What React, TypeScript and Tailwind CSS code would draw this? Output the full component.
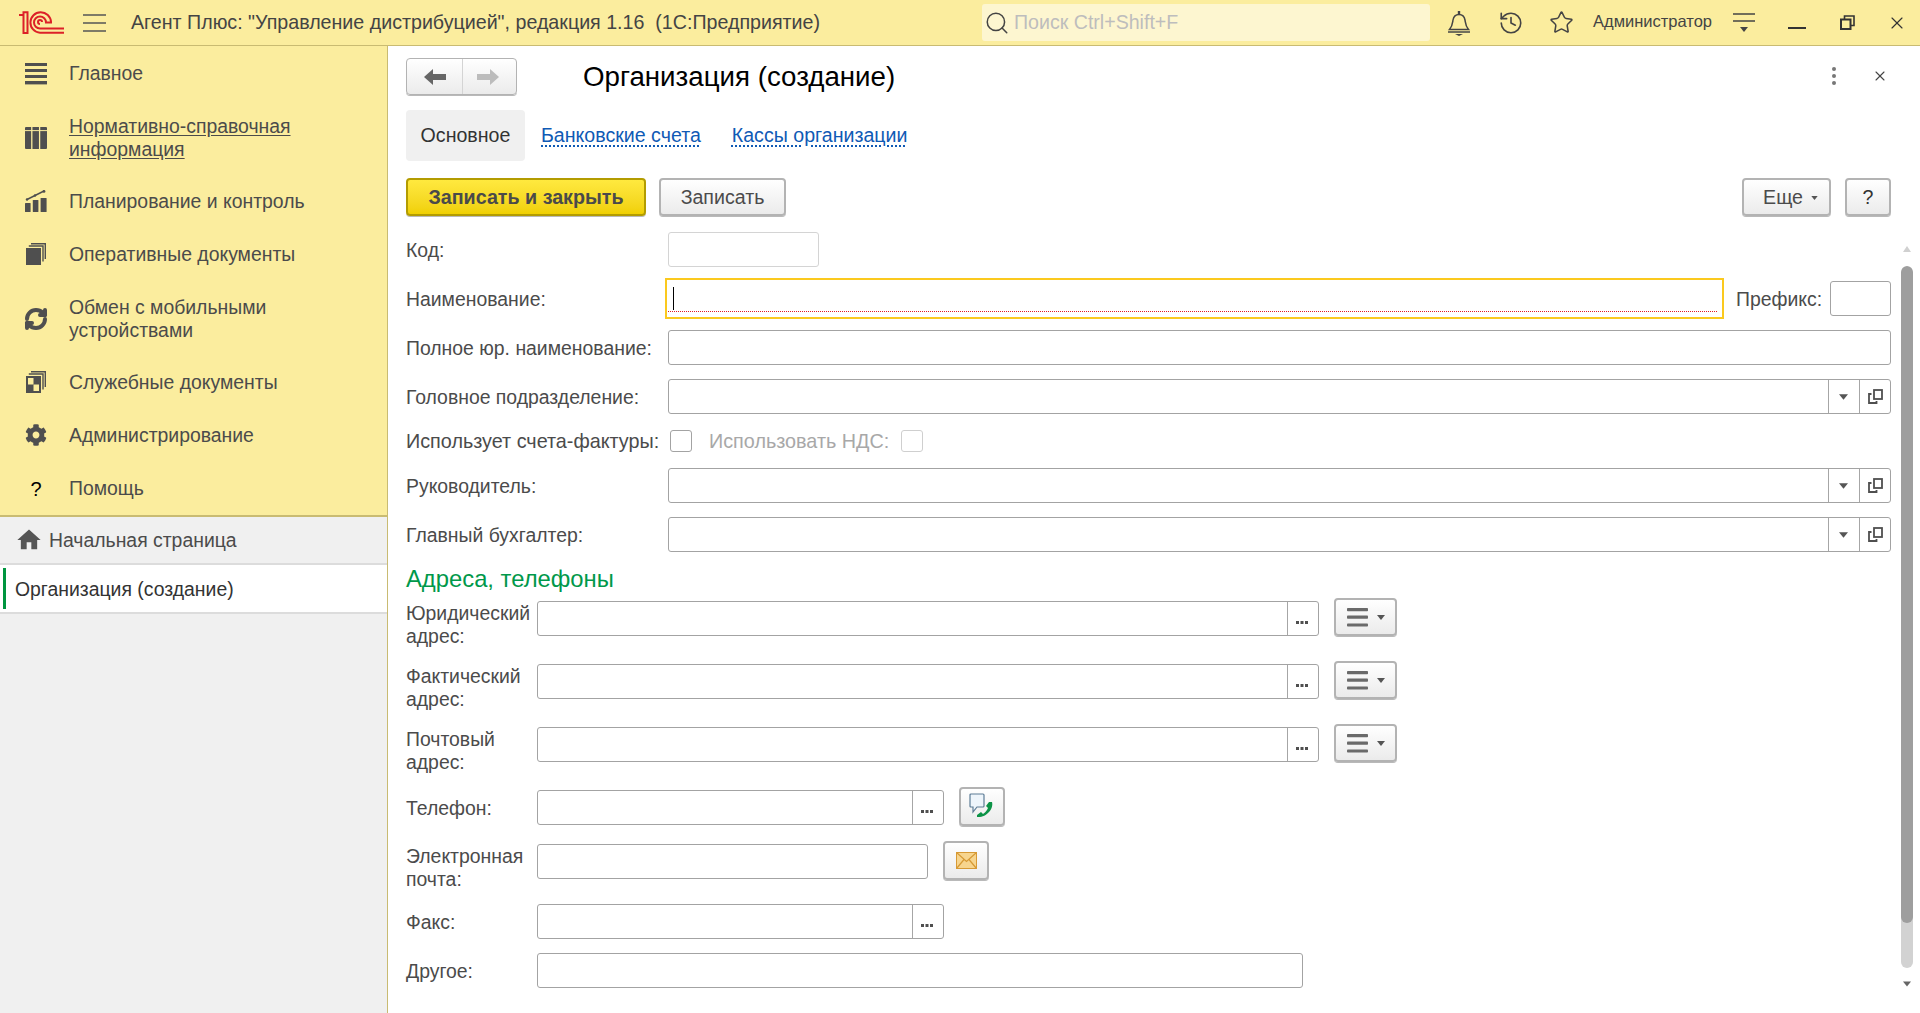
import React from "react";
import { History, Search, Star, X, RefreshCw } from "lucide-react";
import { FaCog } from "react-icons/fa";
import { MdHome } from "react-icons/md";

const Logo = () => (
  <svg width="45" height="23" viewBox="0 0 45 23" fill="none" stroke="#dc2128" strokeWidth="2">
    <path d="M0 4 H4.5 V1.2 H8.5 V22 H4.5 V5" />
    <path d="M45 21.8 H21 A10.3 10.3 0 1 1 32 11" />
    <path d="M45 17.5 H21 A6 6 0 1 1 27 11.5 H33" />
    <path d="M21 13 A2 2 0 1 1 23 11" />
  </svg>
);

const Hamburger = () => (
  <svg width="23" height="18" viewBox="0 0 23 18" stroke="#555" strokeWidth="1.4">
    <path d="M0 1 H23 M0 9 H23 M0 17 H23" />
  </svg>
);

const IconList = () => (
  <svg width="22" height="22" viewBox="0 0 22 22" fill="#4f4f4f">
    <rect y="0" width="22" height="3" />
    <rect y="6" width="22" height="3" />
    <rect y="12" width="22" height="3" />
    <rect y="18" width="22" height="3.4" />
  </svg>
);
const IconTable = () => (
  <svg width="22" height="22" viewBox="0 0 22 22" fill="#4f4f4f">
    <rect x="0" y="0" width="22" height="22" rx="1" />
    <path d="M6.8 0 V22 M14.6 0 V22" stroke="#fbed9e" strokeWidth="1.3" />
    <path d="M0 3.6 H22" stroke="#fbed9e" strokeWidth="1" />
  </svg>
);
const IconChart = () => (
  <svg width="22" height="22" viewBox="0 0 22 22" fill="#4f4f4f">
    <rect x="0" y="13" width="5.6" height="9" rx="0.6" />
    <rect x="7.8" y="10" width="5.6" height="12" rx="0.6" />
    <rect x="15.6" y="8" width="6" height="14" rx="0.6" />
    <path d="M2 9.5 L10 5.5 L19 1" stroke="#4f4f4f" strokeWidth="1.5" fill="none" />
    <circle cx="19" cy="1.4" r="1.4" />
    <circle cx="10" cy="5.5" r="1.2" />
    <circle cx="2" cy="9.5" r="1.2" />
  </svg>
);
const IconDocs = ({ check = false }: { check?: boolean }) => (
  <svg width="20" height="22" viewBox="0 0 20 22" fill="none">
    <rect x="0" y="5" width="15" height="17" fill="#4f4f4f" />
    {check && (
      <>
        <rect x="2" y="7" width="5.5" height="6.5" fill="#fbed9e" />
        <rect x="7.5" y="13.5" width="5.5" height="6.5" fill="#fbed9e" />
      </>
    )}
    <path d="M2.8 3 H17 V18.5" stroke="#4f4f4f" strokeWidth="1.4" />
    <path d="M5 0.8 H19.3 V16" stroke="#4f4f4f" strokeWidth="1.4" />
  </svg>
);

const IconBell = () => (
  <svg width="24" height="26" viewBox="0 0 24 26" fill="none" stroke="#444" strokeWidth="1.5">
    <path d="M2.5 19.5 C5.5 16 5.5 13 6 10 C6.6 6.5 9 4.5 12 4.5 C15 4.5 17.4 6.5 18 10 C18.5 13 18.5 16 21.5 19.5 Z" />
    <path d="M12 1 V4.5" strokeWidth="2.4" />
    <path d="M1 22 H23" />
    <path d="M8 24 H16 L12 26 Z" fill="#444" stroke="none" />
  </svg>
);

const IconFilter = () => (
  <svg width="22" height="20" viewBox="0 0 22 20" fill="none" stroke="#444" strokeWidth="1.4">
    <path d="M0 1 H22 M0 8 H22" />
    <path d="M7 14 H15 L11 19 Z" fill="#444" stroke="none" />
  </svg>
);

const IconRestore = () => (
  <svg width="15" height="15" viewBox="0 0 15 15" fill="none" stroke="#333" strokeWidth="2">
    <rect x="1" y="4.5" width="9.5" height="9.5" />
    <path d="M4.5 4 V1 H14 V10.5 H11" strokeWidth="1.6" />
  </svg>
);

const Triangle = ({ w = 9, h = 6, color = "#555" }: { w?: number; h?: number; color?: string }) => (
  <svg width={w} height={h} viewBox="0 0 8 5">
    <path d="M0 0 H8 L4 5 Z" fill={color} />
  </svg>
);

const IconCopy = () => (
  <svg width="15" height="15" viewBox="0 0 15 15" fill="none" stroke="#4f4f4f">
    <rect x="6" y="1" width="8" height="9" strokeWidth="1.8" />
    <path d="M3.5 5 H1 V14 H8.5 V12" strokeWidth="1.8" />
  </svg>
);

const Dots = () => (
  <svg width="12" height="3" viewBox="0 0 12 3" fill="#4f4f4f" className="mt-[7px]">
    <rect x="0" width="3" height="3" />
    <rect x="4.5" width="3" height="3" />
    <rect x="9" width="3" height="3" />
  </svg>
);

const ArrowLeft = ({ color }: { color: string }) => (
  <svg width="22" height="16" viewBox="0 0 22 16">
    <path d="M0 8 L9 0 V5 H22 V11 H9 V16 Z" fill={color} />
  </svg>
);
const ArrowRight = ({ color }: { color: string }) => (
  <svg width="22" height="16" viewBox="0 0 22 16">
    <path d="M22 8 L13 0 V5 H0 V11 H13 V16 Z" fill={color} />
  </svg>
);

const IconMenuBars = () => (
  <svg width="21" height="19" viewBox="0 0 21 19" fill="#6a6a6a">
    <rect width="21" height="3.2" rx="0.8" />
    <rect y="7.6" width="21" height="3.2" rx="0.8" />
    <rect y="15.4" width="21" height="3.2" rx="0.8" />
  </svg>
);

const IconPhone = () => (
  <svg width="26" height="28" viewBox="0 0 26 28" fill="none">
    <path d="M1 2 Q1 1 2 1 H14 Q15 1 15 2 V13 Q15 14 14 14 H8 L4 19 V14 H2 Q1 14 1 13 Z" fill="#eef5fb" stroke="#5d7c96" strokeWidth="1.2" />
    <path d="M23 9 C25 16 17 25 8 24 L8 22 L12 19 L14 21 C17 19 18 17 19 15 L17 13 L20 9 Z" fill="#0d9347" />
  </svg>
);

const IconMail = () => (
  <svg width="21" height="17" viewBox="0 0 21 17" fill="none">
    <rect x="0.5" y="0.5" width="20" height="16" fill="#f7d58e" stroke="#d79a35" />
    <path d="M0.5 0.5 L10.5 9.5 L20.5 0.5 M0.5 16.5 L8 7.5 M20.5 16.5 L13 7.5" stroke="#d79a35" strokeWidth="1.2" />
  </svg>
);

const menu: { h: string; label: React.ReactNode; icon: React.ReactNode }[] = [
  { h: "h-[55px]", label: "Главное", icon: <IconList /> },
  {
    h: "h-[74px]",
    label: (
      <span className="underline underline-offset-2">
        Нормативно-справочная
        <br />
        информация
      </span>
    ),
    icon: <IconTable />,
  },
  { h: "h-[52px]", label: "Планирование и контроль", icon: <IconChart /> },
  { h: "h-[56px] pb-[2px]", label: "Оперативные документы", icon: <IconDocs /> },
  {
    h: "h-[71px]",
    label: (
      <span>
        Обмен с мобильными
        <br />
        устройствами
      </span>
    ),
    icon: <RefreshCw size={24} strokeWidth={4} color="#4f4f4f" />,
  },
  { h: "h-[56px]", label: "Служебные документы", icon: <IconDocs check /> },
  { h: "h-[52px] pb-[2px]", label: "Администрирование", icon: <FaCog size={22} color="#4f4f4f" /> },
  { h: "h-[53px]", label: "Помощь", icon: <span className="text-[20px] text-black">?</span> },
];

const Sidebar = () => (
  <aside className="flex w-[388px] shrink-0 flex-col border-r border-[#c9bb72] bg-[#f0f0f0] text-[19.4px]">
    <nav className="flex flex-col border-b-2 border-[#c9bb72] bg-[#fbed9e]">
      {menu.map((m, i) => (
        <div key={i} className={`flex items-center ${m.h}`}>
          <div className="flex w-[69px] shrink-0 items-center justify-center pl-[3px] pr-0">{m.icon}</div>
          <div className="leading-[23px] text-[#4b4b4b]">{m.label}</div>
        </div>
      ))}
    </nav>
    <div className="flex h-[48px] items-center gap-[6px] border-b-2 border-[#dcdcdc] pl-[15px] pt-[2px]">
      <MdHome size={28} color="#555" className="-mt-[3px]" />
      <span className="text-[#4b4b4b]">Начальная страница</span>
    </div>
    <div className="flex h-[49px] items-center border-b-2 border-[#dcdcdc] bg-white pl-[3px]">
      <div className="h-[41px] w-[3px] bg-[#00953f]" />
      <span className="ml-[9px] pt-[3px] text-[#333]">Организация (создание)</span>
    </div>
  </aside>
);

const Btn = ({ className = "", children }: { className?: string; children: React.ReactNode }) => (
  <button className={`flex items-center justify-center rounded-[4px] border-2 border-[#b3b3b3] bg-linear-to-b from-white to-[#ebebeb] text-[#4b4b4b] shadow-[0_1px_0_#b9b9b9] ${className}`}>
    {children}
  </button>
);

const Label = ({ w, children }: { w: string; children: React.ReactNode }) => (
  <div className={`shrink-0 leading-[23px] text-[#4b4b4b] ${w}`}>{children}</div>
);

const Cell = ({ className = "", children }: { className?: string; children: React.ReactNode }) => (
  <div className={`flex h-full w-[31px] shrink-0 items-center justify-center border-l border-[#a6a6a6] ${className}`}>{children}</div>
);

const Field = ({ className = "", children }: { className?: string; children?: React.ReactNode }) => (
  <div className={`flex h-[35px] items-stretch justify-end rounded-[3px] border border-[#a3a3a3] bg-white ${className}`}>{children}</div>
);

const RefField = ({ label, className = "" }: { label: string; className?: string }) => (
  <div className={`flex h-[35px] items-center ${className}`}>
    <Label w="w-[262px] pt-[2px]">{label}</Label>
    <Field className="flex-1">
      <Cell className="pr-[2px]">
        <Triangle />
      </Cell>
      <Cell>
        <IconCopy />
      </Cell>
    </Field>
  </div>
);

const PlainField = ({ label, className = "" }: { label: string; className?: string }) => (
  <div className={`flex h-[35px] items-center ${className}`}>
    <Label w="w-[262px] pt-[2px]">{label}</Label>
    <Field className="flex-1" />
  </div>
);

const EllipsisCell = () => (
  <Cell className="pr-[2px]">
    <Dots />
  </Cell>
);

const AddressRow = ({ label, className = "" }: { label: string; className?: string }) => (
  <div className={`flex h-[35px] items-start ${className}`}>
    <Label w="w-[131px] pt-[1px]">{label}</Label>
    <Field className="w-[782px]">
      <EllipsisCell />
    </Field>
    <Btn className="relative -top-[3px] ml-[15px] h-[38px] w-[63px] gap-[9px] pl-[1px]">
      <IconMenuBars />
      <Triangle w={8} h={5} />
    </Btn>
  </div>
);

const Form = () => (
  <div className="flex-1 pl-[18px] text-[19.4px]">
    <div className="mt-[7px] flex h-[35px] items-center">
      <Label w="w-[262px] pt-[2px]">Код:</Label>
      <div className="h-[35px] w-[151px] rounded-[3px] border border-[#d4d4d4]" />
    </div>

    <div className="mt-[11px] flex h-[41px] items-center">
      <Label w="w-[259px] pt-[2px]">Наименование:</Label>
      <div className="relative h-[41px] w-[1059px] border-2 border-[#fbc91e] bg-white">
        <div className="absolute left-[6px] top-[7px] h-[23px] w-[1px] bg-black" />
        <div className="absolute left-[1px] right-[5px] top-[31px] border-b border-dotted border-[#e11b22]" />
      </div>
      <div className="ml-[12px] w-[94px] shrink-0 pt-[2px] text-[#4b4b4b]">Префикс:</div>
      <Field className="w-[61px]" />
    </div>

    <PlainField label="Полное юр. наименование:" className="mt-[11px]" />
    <RefField label="Головное подразделение:" className="mt-[14px]" />

    <div className="mt-[16px] flex h-[22px] items-center text-[19.8px]">
      <Label w="w-[264px]">Использует счета-фактуры:</Label>
      <div className="h-[22px] w-[22px] rounded-[3px] border border-[#a3a3a3]" />
      <div className="ml-[17px] w-[192px] shrink-0 leading-[23px] text-[#a8a8a8]">Использовать НДС:</div>
      <div className="h-[22px] w-[22px] rounded-[3px] border border-[#cfcfcf]" />
    </div>

    <RefField label="Руководитель:" className="mt-[16px]" />
    <RefField label="Главный бухгалтер:" className="mt-[14px]" />

    <div className="mt-[13px] h-[28px] text-[23.8px] leading-[28px] text-[#00984a]">Адреса, телефоны</div>

    <AddressRow label="Юридический адрес:" className="mt-[8px]" />
    <AddressRow label="Фактический адрес:" className="mt-[28px]" />
    <AddressRow label="Почтовый адрес:" className="mt-[28px]" />

    <div className="mt-[28px] flex h-[35px] items-start">
      <Label w="w-[131px] pt-[7px]">Телефон:</Label>
      <Field className="w-[407px]">
        <EllipsisCell />
      </Field>
      <Btn className="relative -top-[3px] ml-[15px] h-[39px] w-[46px]">
        <IconPhone />
      </Btn>
    </div>

    <div className="mt-[19px] flex h-[35px] items-start">
      <Label w="w-[131px] pt-[1px]">Электронная почта:</Label>
      <Field className="w-[391px]" />
      <Btn className="relative -top-[3px] ml-[15px] h-[39px] w-[46px]">
        <IconMail />
      </Btn>
    </div>

    <div className="mt-[25px] flex h-[35px] items-center">
      <Label w="w-[131px] pt-[2px]">Факс:</Label>
      <Field className="w-[407px]">
        <EllipsisCell />
      </Field>
    </div>

    <div className="mt-[14px] flex h-[35px] items-center">
      <Label w="w-[131px] pt-[2px]">Другое:</Label>
      <Field className="w-[766px]" />
    </div>
  </div>
);

const Scrollbar = () => (
  <div className="ml-[10px] mr-[7px] flex w-[12px] shrink-0 flex-col items-center">
    <div className="mt-[21px] h-[20px]">
      <svg width="8" height="6" viewBox="0 0 8 6">
        <path d="M4 0 L8 6 H0 Z" fill="#d0d0d0" />
      </svg>
    </div>
    <div className="w-[12px] overflow-hidden rounded-[6px] bg-[#d2d2d2]">
      <div className="h-[657px] rounded-[6px] bg-[#9e9e9e]" />
      <div className="h-[45px]" />
    </div>
    <div className="mt-[13px]">
      <Triangle w={8} h={6} color="#666" />
    </div>
  </div>
);

export default function App() {
  return (
    <div className="flex h-[1013px] w-[1920px] flex-col overflow-hidden bg-white font-['Liberation_Sans',Arial,sans-serif] text-[19.6px]">
      <header className="flex h-[46px] shrink-0 items-center border-b border-[#c9bb72] bg-[#fbed9e] text-[#4b4b4b]">
        <div className="ml-[19px] flex">
          <Logo />
        </div>
        <div className="ml-[19px] flex">
          <Hamburger />
        </div>
        <div className="ml-[25px] w-[851px] shrink-0 whitespace-pre text-[19.65px] text-[#444]">
          {'Агент Плюс: "Управление дистрибуцией", редакция 1.16  (1С:Предприятие)'}
        </div>
        <div className="flex h-[37px] w-[448px] shrink-0 items-center rounded-[3px] bg-[#fdf6d0] pl-[2px]">
          <Search size={26} strokeWidth={1.4} color="#444" />
          <span className="ml-[4px] text-[#bdbdbd]">Поиск Ctrl+Shift+F</span>
        </div>
        <div className="ml-[17px] flex w-[24px] justify-center">
          <IconBell />
        </div>
        <div className="ml-[27px] flex w-[26px] justify-center">
          <History size={26} strokeWidth={1.5} color="#444" />
        </div>
        <div className="ml-[24px] flex w-[26px] justify-center">
          <Star size={25} strokeWidth={1.5} color="#444" />
        </div>
        <div className="ml-[19px] -mt-[2px] w-[120px] shrink-0 whitespace-nowrap text-[16.5px] text-[#444]">Администратор</div>
        <div className="ml-[20px] flex">
          <IconFilter />
        </div>
        <div className="ml-[33px] mt-[11px] h-[2px] w-[18px] bg-[#333]" />
        <div className="ml-[34px] flex">
          <IconRestore />
        </div>
        <div className="ml-[32px] flex">
          <X size={20} strokeWidth={1.4} color="#333" />
        </div>
      </header>

      <div className="flex min-h-0 flex-1">
        <Sidebar />
        <main className="flex min-w-0 flex-1 flex-col">
          <div className="ml-[18px] mr-[29px] mt-[12px] flex h-[37px] items-center">
            <div className="flex h-[37px] w-[111px] rounded-[4px] border border-[#b3b3b3] bg-linear-to-b from-white to-[#ebebeb] shadow-[0_1px_0_#b9b9b9]">
              <div className="flex w-[56px] items-center justify-center border-r border-[#d4d4d4]">
                <ArrowLeft color="#666" />
              </div>
              <div className="flex flex-1 items-center justify-center pr-[4px]">
                <ArrowRight color="#bcbcbc" />
              </div>
            </div>
            <h1 className="ml-[66px] flex-1 text-[27.7px] font-normal text-black">Организация (создание)</h1>
            <div className="-mt-[2px] flex flex-col gap-[3px]">
              <span className="h-[4px] w-[4px] rounded-full bg-[#777]" />
              <span className="h-[4px] w-[4px] rounded-full bg-[#777]" />
              <span className="h-[4px] w-[4px] rounded-full bg-[#777]" />
            </div>
            <div className="-mt-[2px] ml-[36px] mr-[3px] flex">
              <X size={16} strokeWidth={1.6} color="#444" />
            </div>
          </div>

          <div className="ml-[18px] mt-[15px] flex h-[51px] items-center">
            <div className="flex h-[51px] w-[119px] items-center justify-center rounded-[4px] bg-[#f0f0f0] pt-[1px] text-[#333]">Основное</div>
            <a className="ml-[16px] pt-[1px] text-[#0f5ab5] underline decoration-dotted underline-offset-[3px]">Банковские счета</a>
            <a className="ml-[31px] pt-[1px] text-[#0f5ab5] underline decoration-dotted underline-offset-[3px]">Кассы организации</a>
          </div>

          <div className="ml-[18px] mr-[29px] mt-[17px] flex h-[39px] items-start">
            <button className="flex h-[38px] w-[240px] items-center justify-center rounded-[4px] border-2 border-[#b39c00] bg-linear-to-b from-[#ffe93e] to-[#f0d000] pt-[1px] text-[19.7px] font-bold text-[#4a4a4a] shadow-[0_1px_0_#b9b9b9]">
              Записать и закрыть
            </button>
            <Btn className="ml-[13px] h-[38px] w-[127px] pt-[1px]">Записать</Btn>
            <div className="flex-1" />
            <Btn className="h-[38px] w-[89px] gap-[8px] pl-[8px] pt-[1px]">
              Еще
              <Triangle w={7} h={4} />
            </Btn>
            <Btn className="ml-[14px] h-[38px] w-[46px] pt-[1px] text-[#333]">?</Btn>
          </div>

          <div className="mt-[8px] flex min-h-0 flex-1">
            <Form />
            <Scrollbar />
          </div>
        </main>
      </div>
    </div>
  );
}
